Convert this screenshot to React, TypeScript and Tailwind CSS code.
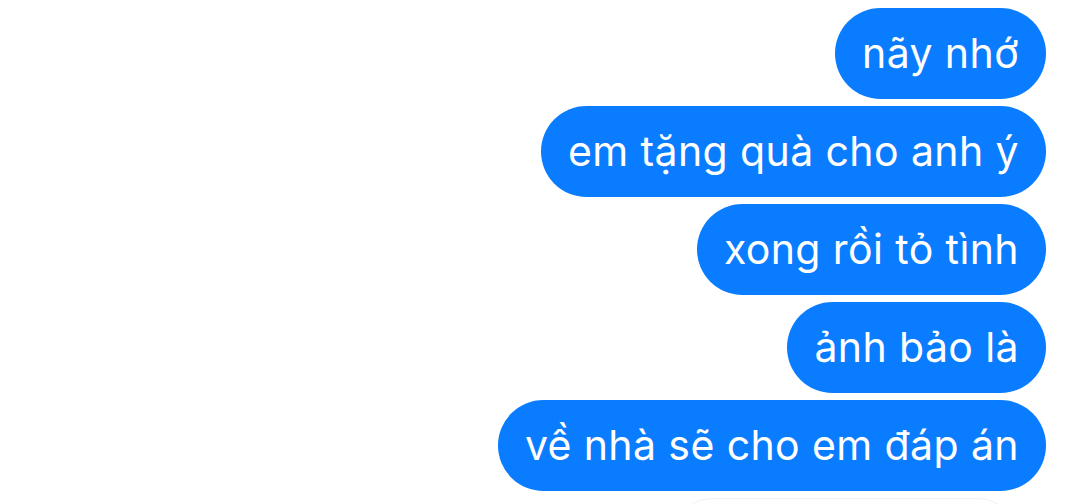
const messages = [
  "nãy nhớ",
  "em tặng quà cho anh ý",
  "xong rồi tỏ tình",
  "ảnh bảo là",
  "về nhà sẽ cho em đáp án",
];

export default function App() {
  return (
    <div className="h-[504px] w-[1080px] overflow-hidden bg-white font-['Inter','Noto_Sans',sans-serif]">
      <div className="flex flex-col items-end gap-[7px] pt-2 pr-[34px]">
        {messages.map((m) => (
          <div
            key={m}
            className="flex h-[91px] items-center rounded-full bg-[#0a7cff] px-[27px] text-[41px] leading-none tracking-[0.4px] text-white"
          >
            {m}
          </div>
        ))}
        <div className="mr-[28px] h-[91px] w-[346px] rounded-[40px] border border-[#f2f2f2] bg-white" />
      </div>
    </div>
  );
}
